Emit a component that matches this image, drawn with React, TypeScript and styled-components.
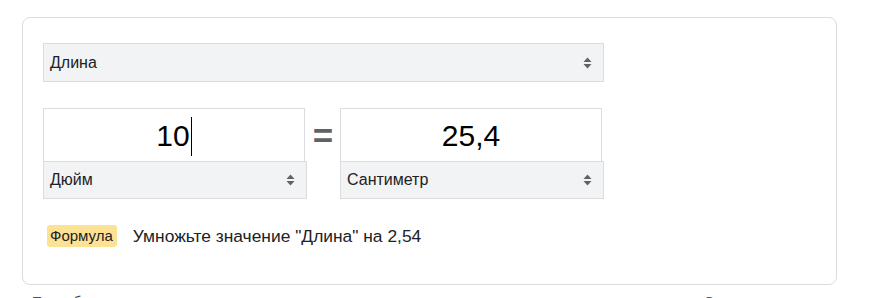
import styled, { createGlobalStyle } from 'styled-components';

const GlobalStyle = createGlobalStyle`
  body {
    margin: 0;
    background: #fff;
    font-family: 'Liberation Sans', Arial, sans-serif;
    color: #202124;
  }
`;

const Page = styled.div`
  padding: 17px 0 0 22px;
  width: 870px;
  height: 298px;
  box-sizing: border-box;
  overflow: hidden;
`;

const Card = styled.div`
  width: 815px;
  height: 268px;
  box-sizing: border-box;
  border: 1px solid #dadce0;
  border-radius: 8px;
  padding: 25px 20px 0 20px;
`;

const SelectBox = styled.div<{ $width: number; $height: number }>`
  width: ${p => p.$width}px;
  height: ${p => p.$height}px;
  box-sizing: border-box;
  background: #f1f3f4;
  border: 1px solid #dadce0;
  display: flex;
  align-items: center;
  justify-content: space-between;
  padding: 0 11px 0 6px;
  font-size: 16px;
  color: #202124;
`;

const Arrows = () => (
  <svg width="9" height="12" viewBox="0 0 9 12">
    <path d="M4.5 0.5 L8.5 5 L0.5 5 Z" fill="#5f6368" />
    <path d="M0.5 7 L8.5 7 L4.5 11.5 Z" fill="#5f6368" />
  </svg>
);

const Row = styled.div`
  display: flex;
  margin-top: 26px;
`;

const Column = styled.div`
  display: flex;
  flex-direction: column;
  width: 263px;
`;

const ValueBox = styled.div`
  width: 262px;
  height: 53px;
  box-sizing: border-box;
  border: 1px solid #dadce0;
  border-bottom: none;
  display: flex;
  align-items: center;
  justify-content: center;
  font-size: 30px;
  color: #000;
  padding-top: 2px;
`;

const Caret = styled.span`
  display: inline-block;
  width: 1px;
  height: 39px;
  background: #000;
  margin-left: 1px;
`;

const Equals = styled.div`
  width: 34px;
  display: flex;
  justify-content: center;
  padding-top: 8px;
  font-size: 35px;
  font-weight: 600;
  line-height: 40px;
  color: #5f6368;
  height: 53px;
  box-sizing: border-box;
`;

const FormulaRow = styled.div`
  display: flex;
  align-items: center;
  margin-top: 26px;
  padding-left: 4px;
`;

const Badge = styled.span`
  background: #fde293;
  border-radius: 3px;
  padding: 0 4px 0 3px;
  height: 22px;
  line-height: 22px;
  font-size: 15px;
  color: #202124;
`;

const FormulaText = styled.span`
  margin-left: 16px;
  font-size: 17.4px;
  color: #202124;
`;

const Footer = styled.div`
  display: flex;
  justify-content: space-between;
  margin-top: 9px;
  padding: 0 0 0 10px;
  width: 713px;
  font-size: 14px;
  line-height: 16px;
  color: #4d5156;
`;

export default function App() {
  return (
    <>
      <GlobalStyle />
      <Page>
        <Card>
          <SelectBox $width={561} $height={39}>
            <span>Длина</span>
            <Arrows />
          </SelectBox>
          <Row>
            <Column>
              <ValueBox>
                10
                <Caret />
              </ValueBox>
              <SelectBox $width={264} $height={38}>
                <span>Дюйм</span>
                <Arrows />
              </SelectBox>
            </Column>
            <Equals>=</Equals>
            <Column>
              <ValueBox>25,4</ValueBox>
              <SelectBox $width={264} $height={38}>
                <span>Сантиметр</span>
                <Arrows />
              </SelectBox>
            </Column>
          </Row>
          <FormulaRow>
            <Badge>Формула</Badge>
            <FormulaText>Умножьте значение "Длина" на 2,54</FormulaText>
          </FormulaRow>
        </Card>
        <Footer>
          <span>Подробнее о единицах измерения</span>
          <span>Отзыв</span>
        </Footer>
      </Page>
    </>
  );
}
